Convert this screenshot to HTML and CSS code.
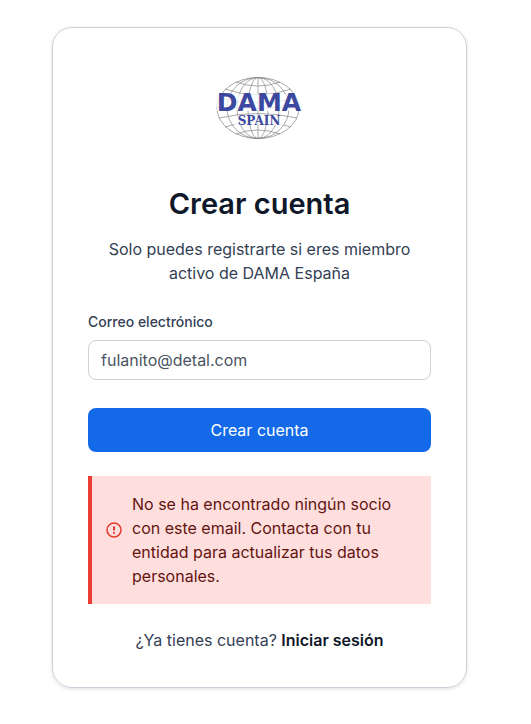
FILE: index.html
```html
<!DOCTYPE html>
<html lang="es">
<head>
  <meta charset="UTF-8">
  <meta name="viewport" content="width=device-width, initial-scale=1">
  <title>Crear cuenta - DAMA España</title>
  <link rel="stylesheet" href="styles.css">
</head>
<body>
  <main class="card">
    <svg class="logo" viewBox="0 0 88 64" role="img" aria-label="DAMA Spain">
      <g class="globe">
        <ellipse cx="42" cy="33" rx="41" ry="30.5"/>
        <ellipse cx="42" cy="33" rx="31" ry="30.5"/>
        <ellipse cx="42" cy="33" rx="21" ry="30.5"/>
        <ellipse cx="42" cy="33" rx="10" ry="30.5"/>
        <path d="M42 2v62M1 33h82"/>
        <path d="M20 7Q42 15 64 7M9 14Q42 26 75 14M3 23Q42 32 81 23"/>
        <path d="M3 43Q42 34 81 43M9 52Q42 40 75 52M20 59Q42 51 64 59"/>
      </g>
      <path class="band" d="M1 19h83v17H1zM18 41h50v9H18z"/>
      <text class="logo-name" x="43" y="36" text-anchor="middle">DAMA</text>
      <text class="logo-country" x="43" y="50" text-anchor="middle">SPAIN</text>
    </svg>

    <h1>Crear cuenta</h1>
    <p class="intro">Solo puedes registrarte si eres miembro activo de DAMA España</p>

    <form>
      <label for="email">Correo electrónico</label>
      <input type="email" id="email" name="email" placeholder="fulanito@detal.com">
      <button type="submit">Crear cuenta</button>
    </form>

    <div class="alert" role="alert">
      <svg class="alert-icon" viewBox="0 0 16 16" aria-hidden="true">
        <circle cx="8" cy="8" r="7"/>
        <path class="mark" d="M8 4.4v4.2M8 10v1.8"/>
      </svg>
      <p>No se ha encontrado ningún socio con este email. Contacta con tu entidad para actualizar tus datos personales.</p>
    </div>

    <p class="login">¿Ya tienes cuenta? <a href="#">Iniciar sesión</a></p>
  </main>
</body>
</html>
```

FILE: styles.css
```css
* {
  box-sizing: border-box;
}

body {
  margin: 0;
  padding: 27px 64px 36px 52px;
  background: #fff;
  color: #334155;
  font-family: Inter, "Liberation Sans", sans-serif;
  font-size: 16px;
  line-height: 24px;
}

.card {
  max-width: 448px;
  margin: 0 auto;
  padding: 35px;
  border: 1px solid #cbd0db;
  border-radius: 20px;
  box-shadow: 0 1px 4px rgba(0, 0, 0, .12);
}

h1, p {
  margin: 0;
  text-align: center;
}

.logo {
  display: block;
  width: 88px;
  height: 64px;
  margin: 12px auto 47px;
}

.globe {
  fill: none;
  stroke: #858585;
  stroke-width: .7;
}

.band {
  fill: #fff;
  opacity: .75;
}

.logo-name {
  fill: #3c489f;
  font: bold 25px "DejaVu Sans", sans-serif;
}

.logo-country {
  fill: #3c489f;
  font: bold 12px "DejaVu Serif", serif;
}

h1 {
  color: #0f172a;
  font-size: 29px;
  font-weight: 600;
  line-height: 36px;
}

.intro {
  margin: 15px 0 27px;
}

form {
  display: flex;
  flex-direction: column;
}

label {
  margin-bottom: 8px;
  font-size: 14px;
  font-weight: 500;
  line-height: 20px;
}

input {
  height: 40px;
  padding: 0 12px;
  border: 1px solid #cbd0d9;
  border-radius: 8px;
  background: #fff;
  color: #0f172a;
  font: inherit;
}

input::placeholder {
  color: #4b5563;
  opacity: 1;
}

button {
  height: 44px;
  margin-top: 28px;
  border: none;
  border-radius: 8px;
  background: #1469e8;
  color: #fff;
  font: inherit;
  cursor: pointer;
}

.alert {
  display: flex;
  align-items: center;
  gap: 10px;
  margin: 24px 0;
  padding: 16px 14px;
  border-left: 4px solid #eb3d34;
  background: #ffdfde;
  color: #641410;
}

.alert p {
  text-align: left;
}

.alert-icon {
  flex: none;
  width: 16px;
  height: 16px;
  margin-bottom: 20px;
  fill: none;
  stroke: #e53930;
  stroke-width: 1.5;
}

.alert-icon .mark {
  stroke-width: 2;
}

.login a {
  color: #0f172a;
  font-weight: 600;
  text-decoration: none;
}
```
